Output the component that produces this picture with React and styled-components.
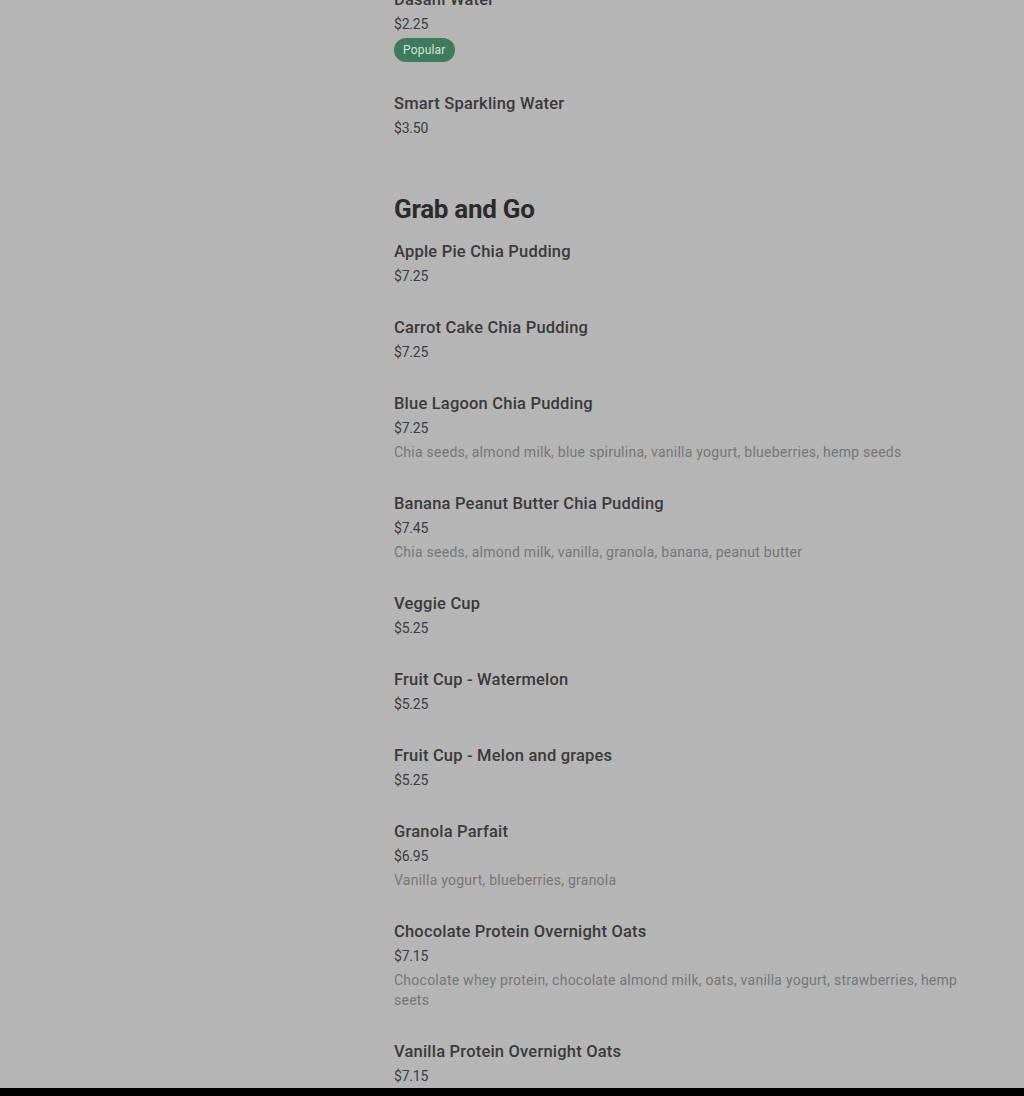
import React, { useLayoutEffect, useRef } from 'react';
import styled, { createGlobalStyle } from 'styled-components';

const GlobalStyle = createGlobalStyle`
  html {
    background: #000;
  }
  body {
    margin: 0;
    font-family: Roboto, "Liberation Sans", sans-serif;
  }
`;

const Overlay = styled.div`
  position: relative;
  height: 1088px;
  overflow: hidden;
  background: #b5b5b5;
`;

const Column = styled.div`
  width: 582px;
  margin-left: 394px;
  padding-bottom: 200px;
`;

const Section = styled.section`
  padding-top: 38px;
`;

const SectionTitle = styled.h2`
  margin: 0 0 2px;
  font-size: 26px;
  line-height: 32px;
  font-weight: 700;
  letter-spacing: -0.3px;
  color: #2b2b2b;
`;

const Item = styled.div`
  padding: 13px 0 15px;
`;

const ItemName = styled.div`
  font-size: 16.5px;
  line-height: 24px;
  font-weight: 500;
  letter-spacing: 0.2px;
  color: #3a3a3a;
`;

const Price = styled.div`
  font-size: 14px;
  line-height: 24px;
  color: #3c3c3c;
  letter-spacing: -0.2px;
`;

const Description = styled.div`
  margin: 2px 0 2px;
  font-size: 14px;
  line-height: 20px;
  letter-spacing: 0.25px;
  color: #767676;
`;

const Badge = styled.div`
  display: flex;
  align-items: center;
  width: fit-content;
  height: 24px;
  margin: 2px 0 2px;
  padding: 0 9px;
  border-radius: 12px;
  background: #3e7a5d;
  color: #d3e3d9;
  font-size: 12px;
  letter-spacing: 0.2px;
`;

const beverages = [
  { name: 'Spring Water', price: '$2.25' },
  { name: 'Dasani Water', price: '$2.25', popular: true, anchor: true },
  { name: 'Smart Sparkling Water', price: '$3.50' },
];

const grabAndGo = [
  { name: 'Apple Pie Chia Pudding', price: '$7.25' },
  { name: 'Carrot Cake Chia Pudding', price: '$7.25' },
  {
    name: 'Blue Lagoon Chia Pudding',
    price: '$7.25',
    desc: 'Chia seeds, almond milk, blue spirulina, vanilla yogurt, blueberries, hemp seeds',
  },
  {
    name: 'Banana Peanut Butter Chia Pudding',
    price: '$7.45',
    desc: 'Chia seeds, almond milk, vanilla, granola, banana, peanut butter',
  },
  { name: 'Veggie Cup', price: '$5.25' },
  { name: 'Fruit Cup - Watermelon', price: '$5.25' },
  { name: 'Fruit Cup - Melon and grapes', price: '$5.25' },
  { name: 'Granola Parfait', price: '$6.95', desc: 'Vanilla yogurt, blueberries, granola' },
  {
    name: 'Chocolate Protein Overnight Oats',
    price: '$7.15',
    desc: 'Chocolate whey protein, chocolate almond milk, oats, vanilla yogurt, strawberries, hemp seets',
  },
  { name: 'Vanilla Protein Overnight Oats', price: '$7.15' },
  { name: 'Peanut Butter Overnight Oats', price: '$7.15' },
];

const MenuItem = ({ item, nameRef }) => (
  <Item>
    <ItemName ref={nameRef}>{item.name}</ItemName>
    <Price>{item.price}</Price>
    {item.desc && <Description>{item.desc}</Description>}
    {item.popular && <Badge>Popular</Badge>}
  </Item>
);

export default function App() {
  const overlayRef = useRef(null);
  const anchorRef = useRef(null);

  useLayoutEffect(() => {
    // keep the list scrolled to where the screenshot was taken
    if (overlayRef.current && anchorRef.current) {
      overlayRef.current.scrollTop = anchorRef.current.offsetTop + 12;
    }
  }, []);

  return (
    <>
      <GlobalStyle />
      <Overlay ref={overlayRef}>
        <Column>
          <Section>
            <SectionTitle>Beverages</SectionTitle>
            {beverages.map((item) => (
              <MenuItem key={item.name} item={item} nameRef={item.anchor ? anchorRef : undefined} />
            ))}
          </Section>
          <Section>
            <SectionTitle>Grab and Go</SectionTitle>
            {grabAndGo.map((item) => (
              <MenuItem key={item.name} item={item} />
            ))}
          </Section>
        </Column>
      </Overlay>
    </>
  );
}
